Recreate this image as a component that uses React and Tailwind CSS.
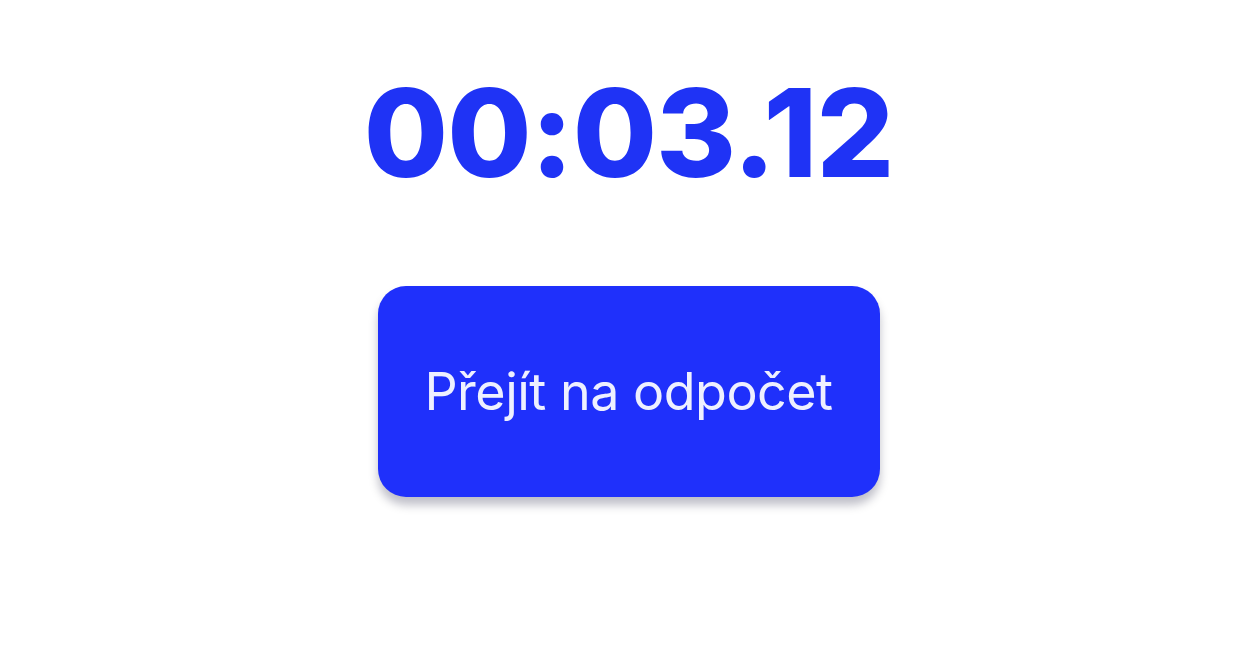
import React from 'react';

const App = () => {
  return (
    <div className="w-full h-[659px] bg-white flex flex-col items-center" style={{ fontFamily: 'Inter, "Noto Sans", sans-serif' }}>
      <h1 className="mt-[60px] text-[122px] leading-[146px] font-extrabold text-[#1f33f5] tracking-[-1px]">
        00:03.12
      </h1>
      <button className="mt-[80px] w-[502px] h-[211px] rounded-[28px] bg-[#1f30fb] text-[#eef0ff] text-[52px] font-normal shadow-[0_8px_10px_rgba(0,0,40,0.25)] tracking-[-0.5px]">
        Přejít na odpočet
      </button>
    </div>
  );
};

export default App;
